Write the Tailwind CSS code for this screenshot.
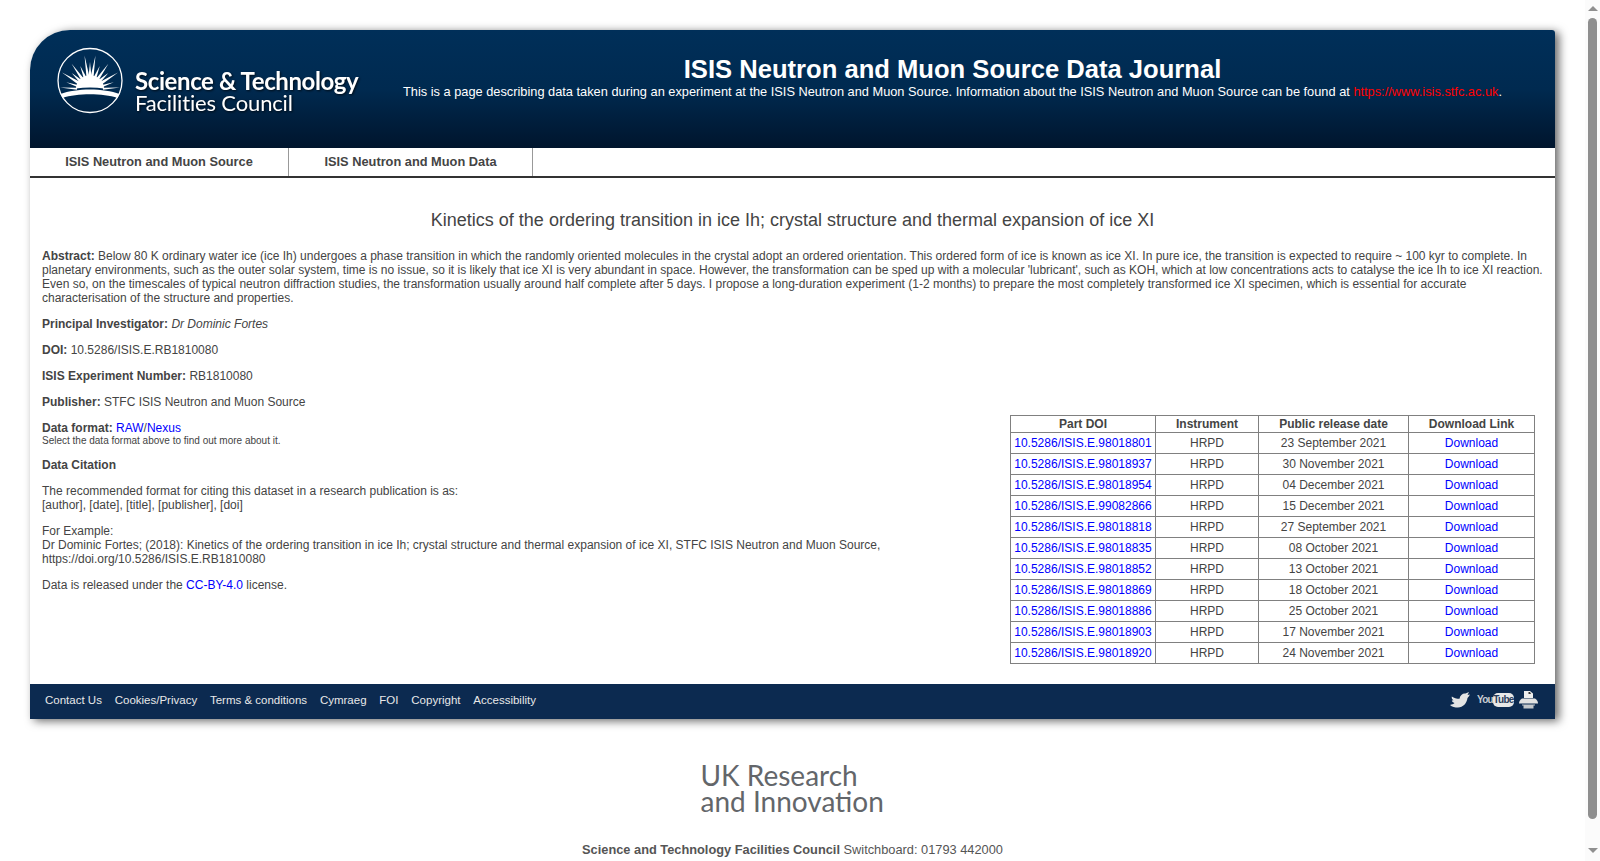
<!doctype html>
<html lang="en"><head><meta charset="utf-8"><title>ISIS Neutron and Muon Source Data Journal</title>
<script src="https://cdn.jsdelivr.net/npm/@tailwindcss/browser@4"></script></head>
<body class="bg-white">
<div class="flex h-[861px] w-[1600px] overflow-hidden font-['Liberation_Sans',Arial,sans-serif] text-[12px] leading-[14px] text-[#444]">
  <div class="w-[1585px] shrink-0 pt-[30px] pl-[30px] pr-[30px]">
    <div class="w-[1525px] h-[689px] flex flex-col shadow-[4px_2px_10px_rgba(0,0,0,0.6)] rounded-tl-[40px] rounded-tr-[3px] bg-white">
      <header class="h-[118px] flex rounded-tl-[40px] rounded-tr-[3px] bg-gradient-to-b from-[#002f59] via-[#002a50] to-[#00152d] text-white">
        <div class="w-[345px] shrink-0 pl-[27px] pt-[17px] flex items-start">
          <svg width="66" height="67" viewBox="0 0 66 67" class="shrink-0" fill="none">
            <circle cx="33" cy="33.5" r="32" stroke="#fff" stroke-width="1.3"/>
            <path d="M3.5 47 C19 41 47 41 62.5 47 L60.5 51 C46 46 20 46 5.5 51 Z" fill="#fff"/>
            <path d="M19 41.5 A14 13 0 0 1 47 41.5 C38 40 28 40 19 41.5Z" fill="#fff"/>
            <g fill="#fff">
              <path d="M33 15 L31.5 30 H34.5Z"/>
              <path d="M33 8 L31.5 30 H34.5Z" transform="rotate(-9 33 43)"/>
              <path d="M33 8 L31.5 30 H34.5Z" transform="rotate(9 33 43)"/>
              <path d="M33 17 L31.5 30 H34.5Z" transform="rotate(-22 33 43)"/>
              <path d="M33 17 L31.5 30 H34.5Z" transform="rotate(22 33 43)"/>
              <path d="M33 11 L31.5 30 H34.5Z" transform="rotate(-35 33 43)"/>
              <path d="M33 11 L31.5 30 H34.5Z" transform="rotate(35 33 43)"/>
              <path d="M33 18 L31.5 30 H34.5Z" transform="rotate(-47 33 43)"/>
              <path d="M33 18 L31.5 30 H34.5Z" transform="rotate(47 33 43)"/>
              <path d="M33 10 L31.5 30 H34.5Z" transform="rotate(-58 33 43)"/>
              <path d="M33 10 L31.5 30 H34.5Z" transform="rotate(58 33 43)"/>
              <path d="M33 18 L32 30 H34Z" transform="rotate(-72 33 43)"/>
              <path d="M33 18 L32 30 H34Z" transform="rotate(72 33 43)"/>
              <path d="M33 13 L32 30 H34Z" transform="rotate(-85 33 43)"/>
              <path d="M33 13 L32 30 H34Z" transform="rotate(85 33 43)"/>
            </g>
          </svg>
          <div class="ml-[12px] mt-[21px] font-['Lato',sans-serif] drop-shadow-[1px_1px_1px_rgba(0,0,0,0.7)]">
            <div class="text-[24px] leading-[25px] font-bold tracking-[-0.4px] whitespace-nowrap">Science &amp; Technology</div>
            <div class="text-[22px] leading-[20px] tracking-[-0.15px] whitespace-nowrap">Facilities Council</div>
          </div>
        </div>
        <div class="flex-1 pr-[28px] pl-[3px] text-center">
          <h1 class="mt-[24px] text-[25.6px] leading-[30px] font-bold">ISIS Neutron and Muon Source Data Journal</h1>
          <p class="text-[12.8px] leading-[15px] whitespace-nowrap">This is a page describing data taken during an experiment at the ISIS Neutron and Muon Source. Information about the ISIS Neutron and Muon Source can be found at <a class="text-[#f00]" href="#">https://www.isis.stfc.ac.uk</a>.</p>
        </div>
      </header>
      <nav class="h-[30px] flex border-b-2 border-[#333] text-[12.8px] font-bold text-[#444]">
        <a href="#" class="h-[28px] w-[259px] flex items-center justify-center border-r border-[#999]">ISIS Neutron and Muon Source</a>
        <a href="#" class="h-[28px] w-[244px] flex items-center justify-center border-r border-[#999]">ISIS Neutron and Muon Data</a>
      </nav>
      <main class="flex-1 px-[12px]">
        <h2 class="mt-[31px] text-center text-[18px] leading-[22px] font-normal">Kinetics of the ordering transition in ice Ih; crystal structure and thermal expansion of ice XI</h2>
        <p class="mt-[18px]"><b>Abstract:</b> Below 80 K ordinary water ice (ice Ih) undergoes a phase transition in which the randomly oriented molecules in the crystal adopt an ordered orientation. This ordered form of ice is known as ice XI. In pure ice, the transition is expected to require ~ 100 kyr to complete. In planetary environments, such as the outer solar system, time is no issue, so it is likely that ice XI is very abundant in space. However, the transformation can be sped up with a molecular 'lubricant', such as KOH, which at low concentrations acts to catalyse the ice Ih to ice XI reaction. Even so, on the timescales of typical neutron diffraction studies, the transformation usually around half complete after 5 days. I propose a long-duration experiment (1-2 months) to prepare the most completely transformed ice XI specimen, which is essential for accurate characterisation of the structure and properties.</p>
        <div class="flex items-start">
          <div class="w-[860px] shrink-0 flex flex-col gap-[12px] mt-[12px]">
            <p><b>Principal Investigator:</b> <i>Dr Dominic Fortes</i></p>
            <p><b>DOI:</b> 10.5286/ISIS.E.RB1810080</p>
            <p><b>ISIS Experiment Number:</b> RB1810080</p>
            <p><b>Publisher:</b> STFC ISIS Neutron and Muon Source</p>
            <div><p><b>Data format:</b> <a href="#" class="text-[#00f]">RAW</a>/<a href="#" class="text-[#00f]">Nexus</a></p><p class="text-[10px] leading-[12px]">Select the data format above to find out more about it.</p></div>
            <p class="-mt-[1px]"><b>Data Citation</b></p>
            <p>The recommended format for citing this dataset in a research publication is as:<br>[author], [date], [title], [publisher], [doi]</p>
            <p>For Example:<br>Dr Dominic Fortes; (2018): Kinetics of the ordering transition in ice Ih; crystal structure and thermal expansion of ice XI, STFC ISIS Neutron and Muon Source, https://doi.org/10.5286/ISIS.E.RB1810080</p>
            <p>Data is released under the <a href="#" class="text-[#00f]">CC-BY-4.0</a> license.</p>
          </div>
          <table class="ml-[108px] mt-[110px] border-collapse border border-[#808080] w-[524px] table-fixed text-center whitespace-nowrap">
            <colgroup><col class="w-[145px]"><col class="w-[103px]"><col class="w-[150px]"><col class="w-[126px]"></colgroup>
            <thead><tr class="h-[17px]"><th class="border border-[#808080] p-0 font-bold">Part DOI</th><th class="border border-[#808080] p-0 font-bold">Instrument</th><th class="border border-[#808080] p-0 font-bold">Public release date</th><th class="border border-[#808080] p-0 font-bold">Download Link</th></tr></thead>
            <tbody>
              <tr class="h-[21px]"><td class="border border-[#808080] p-0"><a href="#" class="text-[#00f]">10.5286/ISIS.E.98018801</a></td><td class="border border-[#808080] p-0">HRPD</td><td class="border border-[#808080] p-0">23 September 2021</td><td class="border border-[#808080] p-0"><a href="#" class="text-[#00f]">Download</a></td></tr>
              <tr class="h-[21px]"><td class="border border-[#808080] p-0"><a href="#" class="text-[#00f]">10.5286/ISIS.E.98018937</a></td><td class="border border-[#808080] p-0">HRPD</td><td class="border border-[#808080] p-0">30 November 2021</td><td class="border border-[#808080] p-0"><a href="#" class="text-[#00f]">Download</a></td></tr>
              <tr class="h-[21px]"><td class="border border-[#808080] p-0"><a href="#" class="text-[#00f]">10.5286/ISIS.E.98018954</a></td><td class="border border-[#808080] p-0">HRPD</td><td class="border border-[#808080] p-0">04 December 2021</td><td class="border border-[#808080] p-0"><a href="#" class="text-[#00f]">Download</a></td></tr>
              <tr class="h-[21px]"><td class="border border-[#808080] p-0"><a href="#" class="text-[#00f]">10.5286/ISIS.E.99082866</a></td><td class="border border-[#808080] p-0">HRPD</td><td class="border border-[#808080] p-0">15 December 2021</td><td class="border border-[#808080] p-0"><a href="#" class="text-[#00f]">Download</a></td></tr>
              <tr class="h-[21px]"><td class="border border-[#808080] p-0"><a href="#" class="text-[#00f]">10.5286/ISIS.E.98018818</a></td><td class="border border-[#808080] p-0">HRPD</td><td class="border border-[#808080] p-0">27 September 2021</td><td class="border border-[#808080] p-0"><a href="#" class="text-[#00f]">Download</a></td></tr>
              <tr class="h-[21px]"><td class="border border-[#808080] p-0"><a href="#" class="text-[#00f]">10.5286/ISIS.E.98018835</a></td><td class="border border-[#808080] p-0">HRPD</td><td class="border border-[#808080] p-0">08 October 2021</td><td class="border border-[#808080] p-0"><a href="#" class="text-[#00f]">Download</a></td></tr>
              <tr class="h-[21px]"><td class="border border-[#808080] p-0"><a href="#" class="text-[#00f]">10.5286/ISIS.E.98018852</a></td><td class="border border-[#808080] p-0">HRPD</td><td class="border border-[#808080] p-0">13 October 2021</td><td class="border border-[#808080] p-0"><a href="#" class="text-[#00f]">Download</a></td></tr>
              <tr class="h-[21px]"><td class="border border-[#808080] p-0"><a href="#" class="text-[#00f]">10.5286/ISIS.E.98018869</a></td><td class="border border-[#808080] p-0">HRPD</td><td class="border border-[#808080] p-0">18 October 2021</td><td class="border border-[#808080] p-0"><a href="#" class="text-[#00f]">Download</a></td></tr>
              <tr class="h-[21px]"><td class="border border-[#808080] p-0"><a href="#" class="text-[#00f]">10.5286/ISIS.E.98018886</a></td><td class="border border-[#808080] p-0">HRPD</td><td class="border border-[#808080] p-0">25 October 2021</td><td class="border border-[#808080] p-0"><a href="#" class="text-[#00f]">Download</a></td></tr>
              <tr class="h-[21px]"><td class="border border-[#808080] p-0"><a href="#" class="text-[#00f]">10.5286/ISIS.E.98018903</a></td><td class="border border-[#808080] p-0">HRPD</td><td class="border border-[#808080] p-0">17 November 2021</td><td class="border border-[#808080] p-0"><a href="#" class="text-[#00f]">Download</a></td></tr>
              <tr class="h-[21px]"><td class="border border-[#808080] p-0"><a href="#" class="text-[#00f]">10.5286/ISIS.E.98018920</a></td><td class="border border-[#808080] p-0">HRPD</td><td class="border border-[#808080] p-0">24 November 2021</td><td class="border border-[#808080] p-0"><a href="#" class="text-[#00f]">Download</a></td></tr>
            </tbody>
          </table>
        </div>
      </main>
      <footer class="h-[35px] bg-[#0c2a50] flex items-center pl-[15px] pr-[17px] pb-[4px] text-[11.5px] text-[#e8e8e8]">
        <div class="flex gap-[12.8px]"><a href="#">Contact Us</a><a href="#">Cookies/Privacy</a><a href="#">Terms &amp; conditions</a><a href="#">Cymraeg</a><a href="#">FOI</a><a href="#">Copyright</a><a href="#">Accessibility</a></div>
        <div class="ml-auto flex items-center">
          <svg width="20" height="16" viewBox="0 0 20 16"><path d="M0 13 C2 12.5 3.5 12 4.5 11 C3 10.5 2 9.5 1.8 8.5 L3.5 8.3 C2 7.5 1.5 6 1.8 4.5 C4 6 6.5 6.8 9.5 6.8 C10 3 13 1 15.5 1.5 L19 0 L17.5 3 L20 2.5 C19.2 4 18.3 5 17.5 6 C17 11 13 15.5 8 15.5 C5 15.5 2 15 0 13Z" fill="#e4e4e4"/></svg>
          <span class="ml-[8px] w-[14px] flex justify-center text-[10px] leading-[14px] font-bold text-[#c8ccd2] whitespace-nowrap tracking-[-0.7px]">You</span>
          <span class="ml-[1px] w-[21px] h-[14px] flex justify-center rounded-[5px] bg-[#e8e8e8] text-[#2a3e5c] text-[10px] leading-[14px] font-bold tracking-[-0.7px] whitespace-nowrap">Tube</span>
          <svg class="ml-[5px]" width="19" height="18" viewBox="0 0 19 18"><path d="M5 0 H11 L14 2.5 V7 H5Z" fill="#eee"/><path d="M3 7.5 H16 C18 8.5 19 10.5 19 12.5 H0 C0 10.5 1 8.5 3 7.5Z" fill="#e2e2e2"/><path d="M3 13.5 H16 V14.5 H14.5 V17.5 H4.5 V14.5 H3Z" fill="#c4c8cc"/><path d="M9.5 1 L11 1 L12 3 L9.5 3Z" fill="#333"/></svg>
        </div>
      </footer>
    </div>
    <div class="w-[1525px] mt-[44px] flex flex-col items-center">
      <div class="font-['Lato',sans-serif] text-[28px] leading-[25.5px] text-[#63666a] w-[184px] whitespace-nowrap"><div>UK Research</div><div>and Innovation</div></div>
      <p class="mt-[28px] text-[12.8px] leading-[15px] text-[#555]"><b>Science and Technology Facilities Council</b> Switchboard: 01793 442000</p>
    </div>
  </div>
  <div class="w-[15px] shrink-0 bg-[#fbfbfb] flex flex-col items-center">
    <svg class="mt-[6px] shrink-0" width="10" height="5" viewBox="0 0 10 5"><path d="M5 0 L10 5 H0Z" fill="#8f8f8f"/></svg>
    <div class="mt-[7px] w-[9px] h-[801px] shrink-0 rounded-[5px] bg-[#8f8f8f]"></div>
    <svg class="mt-[29px] shrink-0" width="10" height="5" viewBox="0 0 10 5"><path d="M0 0 H10 L5 5Z" fill="#8f8f8f"/></svg>
  </div>
</div>
</body></html>
